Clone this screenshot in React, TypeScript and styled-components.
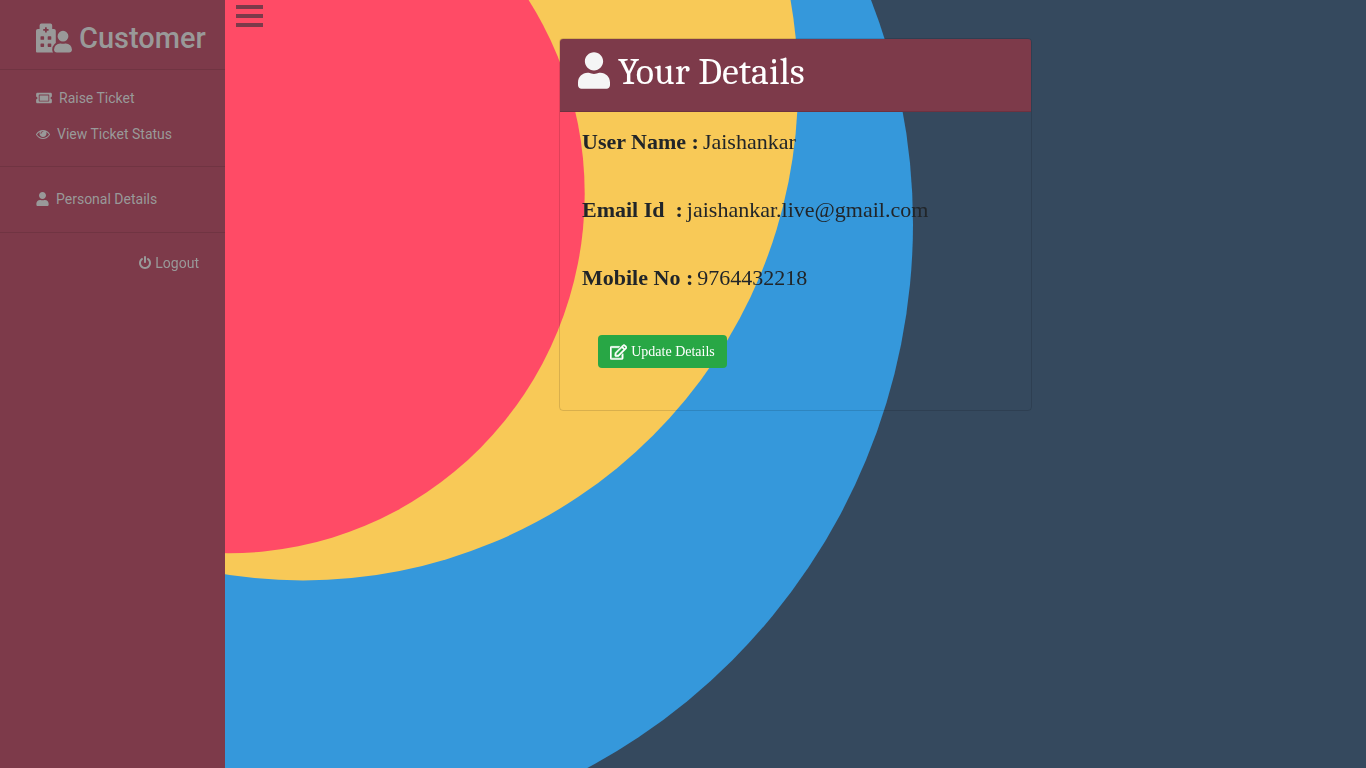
import React from "react";
import styled, { createGlobalStyle } from "styled-components";
import { FaHospitalUser, FaRegEdit, FaTicketAlt, FaUser } from "react-icons/fa";

const GlobalStyle = createGlobalStyle`
  *, *::before, *::after { box-sizing: border-box; }
  body {
    margin: 0;
    background: #35495e;
    color: #212529;
    font-family: "Liberation Serif", "Times New Roman", serif;
  }
`;

const Page = styled.div`
  display: flex;
  min-height: 100vh;
  isolation: isolate;
`;

const Backdrop = styled.svg`
  position: fixed;
  inset: 0;
  width: 100%;
  height: 100%;
  z-index: -1;
`;

const Sidebar = styled.aside`
  flex: 0 0 225px;
  background: #7d3a4a;
  color: #999;
  font-family: Roboto, sans-serif;
  font-size: 14px;
`;

const Brand = styled.h1`
  display: flex;
  align-items: center;
  gap: 7px;
  height: 70px;
  margin: 0;
  padding: 6px 0 0 36px;
  border-bottom: 1px solid #703442;
  font-size: 29px;
  font-weight: 500;

  svg { width: 36px; height: 30px; }
`;

const Group = styled.ul`
  margin: 0;
  padding: 10px 0 14px;
  list-style: none;
  border-bottom: 1px solid #703442;
`;

const NavLink = styled.a<{ $icon: number }>`
  display: flex;
  align-items: center;
  gap: 7px;
  height: 36px;
  padding-left: 36px;
  color: inherit;
  text-decoration: none;

  svg { width: ${({ $icon }) => $icon}px; height: 14px; }
`;

const SingleGroup = styled(Group)`
  padding: 14px 0 15px;
`;

const LogoutLink = styled(NavLink)`
  justify-content: flex-end;
  gap: 4px;
  margin-top: 12px;
  padding: 0 26px 0 0;
`;

const Main = styled.main`
  flex: 1;
  display: grid;
  grid-template-columns: 334fr 473fr 334fr;
  align-items: start;
`;

const MenuButton = styled.button`
  display: flex;
  flex-direction: column;
  gap: 5px;
  width: 27px;
  margin: 5px 0 0 11px;
  padding: 0;
  border: 0;
  background: none;
  cursor: pointer;
`;

const MenuBar = styled.span`
  width: 100%;
  height: 4px;
  background: #7d3a4a;
`;

const Card = styled.section`
  margin-top: 38px;
  border: 1px solid rgba(0, 0, 0, 0.125);
  border-radius: 4px;
  font-size: 22px;
`;

const CardHeader = styled.header`
  display: flex;
  align-items: flex-start;
  gap: 8px;
  height: 73px;
  padding: 13px 18px 0;
  border-bottom: 1px solid rgba(0, 0, 0, 0.125);
  border-radius: 3px 3px 0 0;
  background: #7d3a4a;
  color: #f5f5f5;

  svg { width: 32px; height: 37px; }
`;

const CardTitle = styled.h2`
  margin: 0;
  font-family: Cambria, Caladea, "Liberation Serif", serif;
  font-size: 38px;
  font-weight: 400;
  line-height: 40px;
  color: #fff;
`;

const CardBody = styled.div`
  padding: 14px 22px 42px;
`;

const Details = styled.dl`
  display: grid;
  gap: 36px;
  margin: 0;
`;

const Detail = styled.div`
  display: flex;
  gap: 4px;
  line-height: 32px;

  dt { font-weight: 700; white-space: pre; }
  dd { margin: 0; }
`;

const UpdateButton = styled.button`
  display: flex;
  align-items: center;
  justify-content: center;
  gap: 4px;
  width: 129px;
  height: 33px;
  margin: 41px 0 0 16px;
  padding: 0;
  border: 0;
  border-radius: 4px;
  background: #28a745;
  color: #fff;
  font-family: inherit;
  font-size: 14px;
  cursor: pointer;

  svg { width: 17px; height: 16px; stroke: currentColor; stroke-width: 16px; }
`;

const EyeIcon = () => (
  <svg viewBox="0 0 1792 1792" fill="currentColor" aria-hidden="true">
    <path d="M1664 960q-152-236-381-353 61 104 61 225 0 185-131.5 316.5t-316.5 131.5-316.5-131.5-131.5-316.5q0-121 61-225-229 117-381 353 133 205 333.5 326.5t434.5 121.5 434.5-121.5 333.5-326.5zm-720-384q0-20-14-34t-34-14q-125 0-214.5 89.5t-89.5 214.5q0 20 14 34t34 14 34-14 14-34q0-86 61-147t147-61q20 0 34-14t14-34zm848 384q0 34-20 69-140 230-376.5 368.5t-499.5 138.5-499.5-139-376.5-368q-20-35-20-69t20-69q140-229 376.5-368t499.5-139 499.5 139 376.5 368q20 35 20 69z" />
  </svg>
);

const PowerIcon = () => (
  <svg viewBox="128 0 1536 1792" fill="currentColor" aria-hidden="true">
    <path d="M1664 896q0 156-61 298t-164 245-245 164-298 61-298-61-245-164-164-245-61-298q0-182 80.5-343t226.5-270q43-32 95.5-25t83.5 50q32 42 24.5 94.5t-49.5 84.5q-98 74-151.5 181t-53.5 228q0 104 40.5 198.5t109.5 163.5 163.5 109.5 198.5 40.5 198.5-40.5 163.5-109.5 109.5-163.5 40.5-198.5q0-121-53.5-228t-151.5-181q-42-32-49.5-84.5t24.5-94.5q31-43 84-50t95 25q146 109 226.5 270t80.5 343zm-640-768v640q0 52-38 90t-90 38-90-38-38-90v-640q0-52 38-90t90-38 90 38 38 90z" />
  </svg>
);

const details = [
  { label: "User Name :", value: "Jaishankar" },
  { label: "Email Id\u00a0 :", value: "jaishankar.live@gmail.com" },
  { label: "Mobile No :", value: "9764432218" },
];

export default function App() {
  return (
    <Page>
      <GlobalStyle />
      <Backdrop viewBox="0 0 1366 768" preserveAspectRatio="xMinYMin slice" aria-hidden="true">
        <circle cx="295.5" cy="223.8" r="617.5" fill="#3598db" />
        <circle cx="303" cy="85.5" r="495" fill="#f8c957" />
        <ellipse cx="228.7" cy="193.7" rx="356" ry="359.5" fill="#ff4b66" />
      </Backdrop>
      <Sidebar>
        <Brand><FaHospitalUser />Customer</Brand>
        <nav>
          <Group>
            <li><NavLink href="#raise" $icon={16}><FaTicketAlt />Raise Ticket</NavLink></li>
            <li><NavLink href="#status" $icon={14}><EyeIcon />View Ticket Status</NavLink></li>
          </Group>
          <SingleGroup>
            <li><NavLink href="#details" $icon={13}><FaUser />Personal Details</NavLink></li>
          </SingleGroup>
          <LogoutLink href="#logout" $icon={12}><PowerIcon />Logout</LogoutLink>
        </nav>
      </Sidebar>
      <Main>
        <MenuButton type="button" aria-label="Toggle menu">
          <MenuBar /><MenuBar /><MenuBar />
        </MenuButton>
        <Card>
          <CardHeader>
            <FaUser />
            <CardTitle>Your Details</CardTitle>
          </CardHeader>
          <CardBody>
            <Details>
              {details.map(({ label, value }) => (
                <Detail key={label}>
                  <dt>{label}</dt>
                  <dd>{value}</dd>
                </Detail>
              ))}
            </Details>
            <UpdateButton type="button"><FaRegEdit />Update Details</UpdateButton>
          </CardBody>
        </Card>
      </Main>
    </Page>
  );
}
